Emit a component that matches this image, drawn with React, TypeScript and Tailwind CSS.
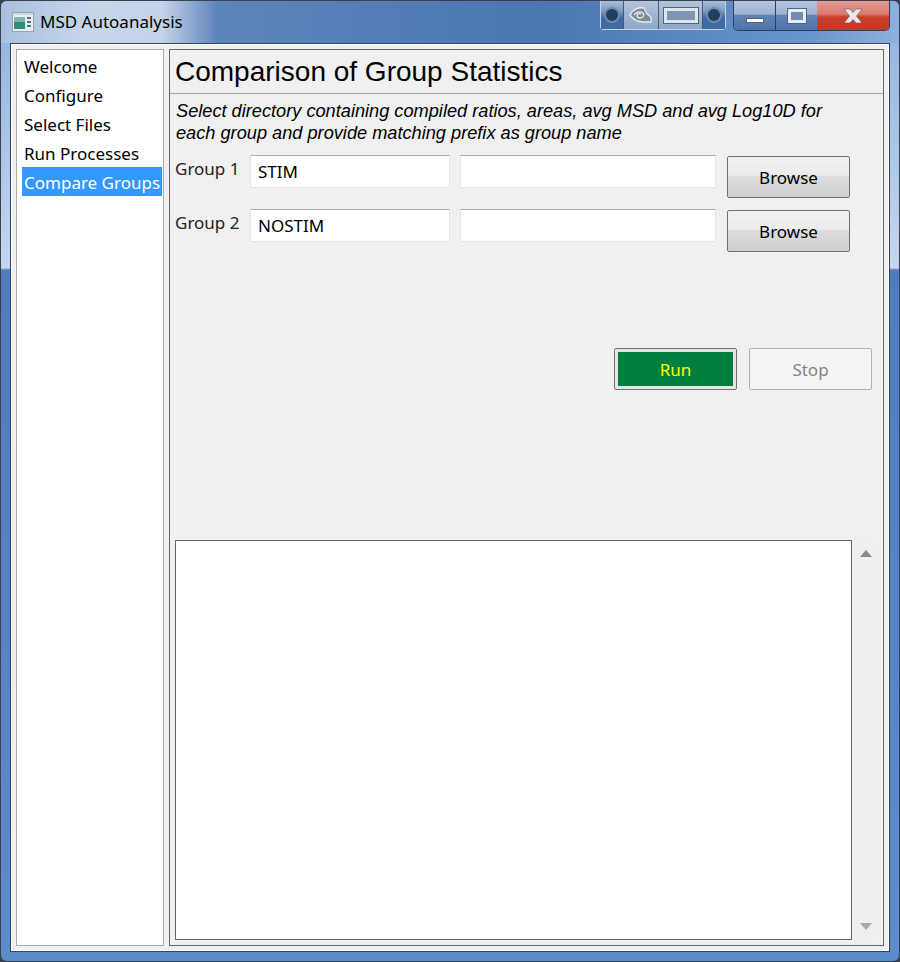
const UI = "font-['Noto_Sans',sans-serif]";
const ARIAL = "font-['Liberation_Sans',Arial,sans-serif]";

const NAV = ["Welcome", "Configure", "Select Files", "Run Processes", "Compare Groups"];

function AppIcon() {
  return (
    <svg width="22" height="20" viewBox="0 0 22 20" className="shrink-0">
      <rect x="0.5" y="0.5" width="21" height="19" fill="#e8eef0" stroke="#9aa3ad" />
      <rect x="1" y="1" width="20" height="2" fill="#cfd8e3" />
      <rect x="2" y="5" width="11" height="12" fill="#2f8f6e" />
      <rect x="2" y="5" width="11" height="5" fill="#7fb6b0" />
      <rect x="15" y="5" width="4" height="2" fill="#5a6a7a" />
      <rect x="15" y="9" width="4" height="2" fill="#5a6a7a" />
      <rect x="15" y="13" width="4" height="2" fill="#2f8f6e" />
    </svg>
  );
}

function Knob() {
  return (
    <div className="flex w-[22px] items-center justify-center bg-[linear-gradient(#a9bdd8_0%,#7f9cc4_35%,#3f6aa6_60%,#3f6aa6_100%)]">
      <span className="h-[16px] w-[16px] rounded-full border-2 border-[#6f8bb0] bg-[#233c60]" />
    </div>
  );
}

function GlassToolbar() {
  return (
    <div className="flex h-[29px] w-[126px] rounded-b-[4px] border border-t-0 border-[#c5d4e8] bg-[#44597a] gap-px">
      <Knob />
      <div className="flex w-[35px] items-center justify-center bg-gradient-to-b from-[#b3c4dc] to-[#8ea8ca]">
        <svg width="24" height="20" viewBox="0 0 24 20" fill="none" stroke="#e8ecf2" strokeWidth="1.300">
          <path d="M1 10c3-6 9-8 14-7l3 6 4 3v5h-8c-5 0-10-3-13-7z" fill="#7d8898" />
          <path d="M5 10c2-3 6-4 9-2 2 2 0 5-3 5-2 0-3-1-3-3 1-2 3-2 4-1" />
        </svg>
      </div>
      <div className="flex w-[44px] items-center justify-center bg-gradient-to-b from-[#b3c4dc] to-[#8ea8ca]">
        <span className="h-[15px] w-[34px] border-[3px] border-[#dfe5ed] bg-[#7d94b5] outline outline-1 outline-[#55637a]" />
      </div>
      <Knob />
    </div>
  );
}

function WindowButtons() {
  const glass = "bg-[linear-gradient(#b4c5dd_0%,#9db3d1_45%,#5f84b6_50%,#4d74aa_100%)]";
  return (
    <div className="flex h-[30px] w-[157px] overflow-hidden rounded-b-[5px] border border-t-0 border-[#2c3f5e]">
      <div className={`flex w-[42px] items-end justify-center pb-[7px] border-r border-[#2c3f5e] ${glass}`}>
        <span className="h-[5px] w-[18px] bg-white border border-[#55637a]" />
      </div>
      <div className={`flex w-[41px] items-center justify-center ${glass}`}>
        <span className="h-[14px] w-[18px] border-[3px] border-[#e9edf3] bg-[#6f8bb2] outline outline-1 outline-[#55637a]" />
      </div>
      <div className="flex flex-1 items-center justify-center bg-[linear-gradient(#e59a90_0%,#dc7a6e_45%,#c8402a_55%,#c23a26_100%)]">
        <svg width="20" height="16" viewBox="0 0 20 16">
          <path d="M1 1h6l3 3.500L13 1h6l-5.500 7 5.500 7h-6l-3-3.500L7 15H1l5.500-7z" fill="#e8e8e8" stroke="#6b4a48" strokeWidth="0.6" />
        </svg>
      </div>
    </div>
  );
}

function GreyButton({ label }: { label: string }) {
  return (
    <button className={`${UI} flex h-[42px] w-[123px] items-center justify-center rounded-[2px] border border-[#707070] pt-[2px] text-[17px] text-black bg-[linear-gradient(#f2f2f2_0%,#ebebeb_48%,#dddddd_48%,#cfcfcf_100%)]`}>
      {label}
    </button>
  );
}

function GroupRow({ label, value }: { label: string; value: string }) {
  return (
    <div className="flex h-[54px] items-start">
      <span className={`${UI} w-[75px] pt-[1px] text-[17px] leading-[26px] text-[#222]`}>{label}</span>
      <div className={`${UI} flex h-[33px] w-[200px] items-center rounded-[1px] border border-[#e2e3ea] border-t-[#abadb3] bg-white pl-[7px] text-[17px] text-black`}>
        {value}
      </div>
      <div className="ml-[10px] h-[33px] w-[256px] rounded-[1px] border border-[#e2e3ea] border-t-[#abadb3] bg-white" />
      <div className="ml-[11px] mt-[1px]">
        <GreyButton label="Browse" />
      </div>
    </div>
  );
}

export default function App() {
  return (
    <div className="h-[962px] w-[900px] bg-[#39414f]">
      <div className="flex h-full w-full flex-col overflow-hidden rounded-[7px] border border-[#39414f] bg-[linear-gradient(#8fb0dd_0px,#c4d6ee_267px,#4f7cbc_269px,#5d8ccb_100%)]">
        {/* Title bar */}
        <div className="flex h-[42px] shrink-0 items-start bg-[linear-gradient(90deg,#a8bfdf_0%,#c8d6ea_10%,#c4d3e8_18%,#5d85bb_24%,#4b76b2_60%,#6a94cc_90%,#8fb0dd_100%)] pl-[11px]">
          <div className="mt-[11px]"><AppIcon /></div>
          <span className={`${UI} ml-[6px] mt-[8px] text-[17px] leading-[26px] text-black`}>MSD Autoanalysis</span>
          <div className="ml-auto flex gap-[7px] pr-[9px]">
            <GlassToolbar />
            <WindowButtons />
          </div>
        </div>

        {/* Client area */}
        <div className="mx-[9px] mb-[9px] flex min-h-0 flex-1 gap-[5px] border border-[#33455f] bg-[#f0f0f0] pl-[5px] pr-[5px] py-[5px] shadow-[inset_0_0_0_1px_#ffffff]">
          {/* Sidebar */}
          <div className="flex w-[148px] shrink-0 flex-col border border-[#aaaaaa] bg-white pl-[5px] pr-[1px] pt-[1px]">
            {NAV.map(item => (
              <div key={item}
                className={`${UI} h-[29px] whitespace-nowrap pl-[2px] pt-[1px] text-[17px] leading-[29px] ${item === "Compare Groups" ? "bg-[#3399ff] text-white" : "text-black"}`}>
                {item}
              </div>
            ))}
          </div>

          {/* Main panel */}
          <div className="flex min-w-0 flex-1 flex-col border border-[#666666] bg-[#f0f0f0]">
            <div className={`${ARIAL} h-[44px] shrink-0 border-b border-[#a8a8a8] pl-[5px] text-[28px] leading-[44px] text-black`}>
              Comparison of Group Statistics
            </div>
            <p className={`${ARIAL} mt-[6px] pl-[6px] text-[18.200px] font-normal italic leading-[22px] text-black`}>
              Select directory containing compiled ratios, areas, avg MSD and avg Log10D for<br />
              each group and provide matching prefix as group name
            </p>
            <div className="mt-[11px] pl-[5px]">
              <GroupRow label="Group 1" value="STIM" />
              <GroupRow label="Group 2" value="NOSTIM" />
            </div>

            <div className="mt-[85px] flex justify-end gap-[12px] pr-[11px]">
              <button className={`${UI} flex h-[42px] w-[123px] items-center justify-center rounded-[2px] border border-[#707070] bg-[#e6e6e6] p-[3px] text-[17px] text-[#ffff00]`}>
                <span className="flex h-full w-full items-center justify-center bg-[#007f3f] pt-[1px]">Run</span>
              </button>
              <button className={`${UI} flex h-[42px] w-[123px] items-center justify-center rounded-[2px] border border-[#adb2b5] bg-[#f4f4f4] pt-[1px] text-[17px] text-[#838383]`}>
                Stop
              </button>
            </div>

            <div className="mt-[150px] flex min-h-0 flex-1 pb-[5px] pl-[5px]">
              <div className="h-[400px] w-[677px] border border-[#666666] bg-white" />
              <div className="ml-[1px] flex h-[400px] w-[26px] flex-col items-center justify-between bg-[#efefef] py-[10px]">
                <svg width="12" height="7" viewBox="0 0 12 7"><path d="M6 0l6 7H0z" fill="#8a8a8a" /></svg>
                <svg width="12" height="7" viewBox="0 0 12 7"><path d="M0 0h12L6 7z" fill="#a8a8a8" /></svg>
              </div>
            </div>
          </div>
        </div>
      </div>
    </div>
  );
}
